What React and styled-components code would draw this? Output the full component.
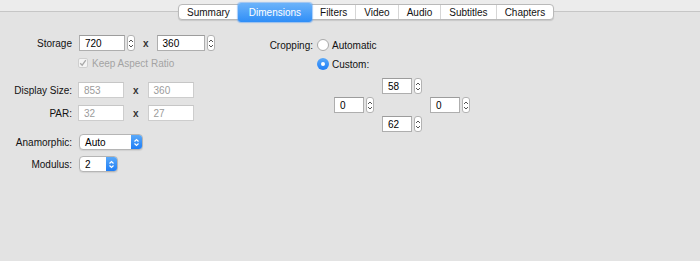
import React from 'react';
import styled, { createGlobalStyle, css } from 'styled-components';

const GlobalStyle = createGlobalStyle`
  html, body {
    margin: 0;
    padding: 0;
    background: #e3e3e3;
  }
  body {
    font-family: "Liberation Sans", Arial, sans-serif;
    font-size: 10px;
    color: #111;
  }
`

const Page = styled.div`
  width: 700px;
  height: 261px;
  background: #e3e3e3;
  overflow: hidden;
`

const Header = styled.div`
  height: 12px;
  background: #ececec;
  border-bottom: 1px solid #c6c6c6;
  padding: 4px 0 0 178px;
  box-sizing: border-box;
  display: flex;
  align-items: flex-start;
`

const TabBar = styled.div`
  display: flex;
  height: 16px;
  background: #fff;
  border: 1px solid #b9b9b9;
  border-radius: 4px;
  box-shadow: 0 1px 1px rgba(0, 0, 0, 0.12);
  box-sizing: border-box;
`

const Tab = styled.div`
  display: flex;
  align-items: center;
  justify-content: center;
  padding: 0 8px;
  height: 100%;
  border-left: 1px solid #d6d6d6;
  color: #111;
  &:first-child {
    border-left: none;
  }
  ${p => p.$active && css`
    height: 19px;
    margin: -2px 0;
    padding: 0 11px;
    color: #fff;
    border-left: none;
    border-radius: 3px;
    background: linear-gradient(#6cb3fa, #2f8ef7);
    box-shadow: 0 0 1px 1px rgba(90, 160, 245, 0.55);
    & + div {
      border-left: none;
    }
  `}
`

const Body = styled.div`
  display: flex;
  align-items: flex-start;
`

const LeftPanel = styled.div`
  width: 250px;
  padding-top: 23px;
  display: flex;
  flex-direction: column;
`

const Row = styled.div`
  display: flex;
  align-items: center;
  height: ${p => p.$h || 16}px;
  margin-top: ${p => p.$mt || 0}px;
`

const Label = styled.div`
  width: ${p => p.$w || 72}px;
  margin-right: ${p => p.$gap ?? 6}px;
  text-align: right;
  flex-shrink: 0;
  color: #111;
`

const Field = styled.div`
  width: ${p => p.$w}px;
  height: 16px;
  box-sizing: border-box;
  background: #fff;
  border: 1px solid ${p => (p.$disabled ? '#cdcdcd' : '#aeaeae')};
  border-top-color: ${p => (p.$disabled ? '#c6c6c6' : '#9c9c9c')};
  padding: 0 5px;
  display: flex;
  align-items: center;
  color: ${p => (p.$disabled ? '#9b9b9b' : '#000')};
  margin-left: ${p => p.$ml || 0}px;
`

const StepperBox = styled.div`
  width: 8px;
  height: 16px;
  margin-left: 2px;
  box-sizing: border-box;
  border: 1px solid #b3b3b3;
  border-radius: 3px;
  background: #fff;
  display: flex;
  align-items: center;
  justify-content: center;
`

const Times = styled.span`
  margin: 0 ${p => p.$m}px;
  font-weight: bold;
  color: #333;
`

const Check = styled.div`
  width: 10px;
  height: 10px;
  box-sizing: border-box;
  margin-left: 78px;
  margin-right: 4px;
  border: 1px solid #cfcfcf;
  border-radius: 2px;
  background: #f4f4f4;
  display: flex;
  align-items: center;
  justify-content: center;
`

const MutedText = styled.span`
  color: #a3a3a3;
`

const Popup = styled.div`
  width: ${p => p.$w}px;
  height: 16px;
  box-sizing: border-box;
  display: flex;
  border: 1px solid #b5b5b5;
  border-radius: 4px;
  background: #fff;
  box-shadow: 0 1px 1px rgba(0, 0, 0, 0.08);
  overflow: hidden;
  margin-left: 1px;
`

const PopupText = styled.div`
  flex: 1;
  display: flex;
  align-items: center;
  padding-left: 5px;
  color: #000;
`

const PopupArrow = styled.div`
  width: 11px;
  background: linear-gradient(#5aa9f9, #1f7ef6);
  display: flex;
  align-items: center;
  justify-content: center;
`

const RightPanel = styled.div`
  padding-top: 27px;
  display: flex;
  flex-direction: column;
`

const Radio = styled.div`
  width: 12px;
  height: 12px;
  border-radius: 50%;
  box-sizing: border-box;
  margin-right: 3px;
  display: flex;
  align-items: center;
  justify-content: center;
  ${p => p.$on
    ? css`
      background: linear-gradient(#5aa9f9, #1f7ef6);
      &::after {
        content: '';
        width: 4px;
        height: 4px;
        border-radius: 50%;
        background: #fff;
      }
    `
    : css`
      background: #fff;
      border: 1px solid #a9a9a9;
    `}
`

const CropGrid = styled.div`
  display: grid;
  grid-template-columns: repeat(3, 40px);
  grid-template-rows: repeat(3, 16px);
  column-gap: 8px;
  row-gap: 3px;
  margin: 8px 0 0 84px;
`

const Cell = styled.div`
  display: flex;
  grid-column: ${p => p.$col};
  grid-row: ${p => p.$row};
`

function Stepper() {
  return (
    <StepperBox>
      <svg width="6" height="11" viewBox="0 0 6 11">
        <path d="M1 4 L3 2 L5 4 M1 7 L3 9 L5 7" fill="none" stroke="#555" strokeWidth="1" />
      </svg>
    </StepperBox>
  )
}

function PopupButton({ width, value }) {
  return (
    <Popup $w={width}>
      <PopupText>{value}</PopupText>
      <PopupArrow>
        <svg width="7" height="11" viewBox="0 0 7 11">
          <path d="M1.5 4.5 L3.5 2.5 L5.5 4.5 M1.5 6.5 L3.5 8.5 L5.5 6.5" fill="none" stroke="#fff" strokeWidth="1.2" />
        </svg>
      </PopupArrow>
    </Popup>
  )
}

const tabs = ['Summary', 'Dimensions', 'Filters', 'Video', 'Audio', 'Subtitles', 'Chapters']

function App() {
  return (
    <Page>
      <GlobalStyle />
      <Header>
        <TabBar>
          {tabs.map(t => (
            <Tab key={t} $active={t === 'Dimensions'}>{t}</Tab>
          ))}
        </TabBar>
      </Header>
      <Body>
        <LeftPanel>
          <Row>
            <Label>Storage</Label>
            <Field $w={46} $ml={1}>720</Field>
            <Stepper />
            <Times $m={8}>x</Times>
            <Field $w={48}>360</Field>
            <Stepper />
          </Row>
          <Row $h={12} $mt={6}>
            <Check>
              <svg width="8" height="8" viewBox="0 0 8 8">
                <path d="M1.2 4.2 L3.2 6.2 L6.8 1.2" fill="none" stroke="#a9a9a9" strokeWidth="1.3" />
              </svg>
            </Check>
            <MutedText>Keep Aspect Ratio</MutedText>
          </Row>
          <Row $mt={13}>
            <Label>Display Size:</Label>
            <Field $w={46} $disabled>853</Field>
            <Times $m={9}>x</Times>
            <Field $w={46} $disabled>360</Field>
          </Row>
          <Row $mt={7}>
            <Label>PAR:</Label>
            <Field $w={46} $disabled>32</Field>
            <Times $m={9}>x</Times>
            <Field $w={46} $disabled>27</Field>
          </Row>
          <Row $mt={13}>
            <Label>Anamorphic:</Label>
            <PopupButton width={64} value="Auto" />
          </Row>
          <Row $mt={6}>
            <Label>Modulus:</Label>
            <PopupButton width={39} value="2" />
          </Row>
        </LeftPanel>
        <RightPanel>
          <Row $h={12}>
            <Label $w={63} $gap={4}>Cropping:</Label>
            <Radio />
            <span>Automatic</span>
          </Row>
          <Row $h={12} $mt={7}>
            <Label $w={63} $gap={4} />
            <Radio $on />
            <span>Custom:</span>
          </Row>
          <CropGrid>
            <Cell $col={2} $row={1}><Field $w={30}>58</Field><Stepper /></Cell>
            <Cell $col={1} $row={2}><Field $w={30}>0</Field><Stepper /></Cell>
            <Cell $col={3} $row={2}><Field $w={31}>0</Field><Stepper /></Cell>
            <Cell $col={2} $row={3}><Field $w={30}>62</Field><Stepper /></Cell>
          </CropGrid>
        </RightPanel>
      </Body>
    </Page>
  )
}

export default App;
